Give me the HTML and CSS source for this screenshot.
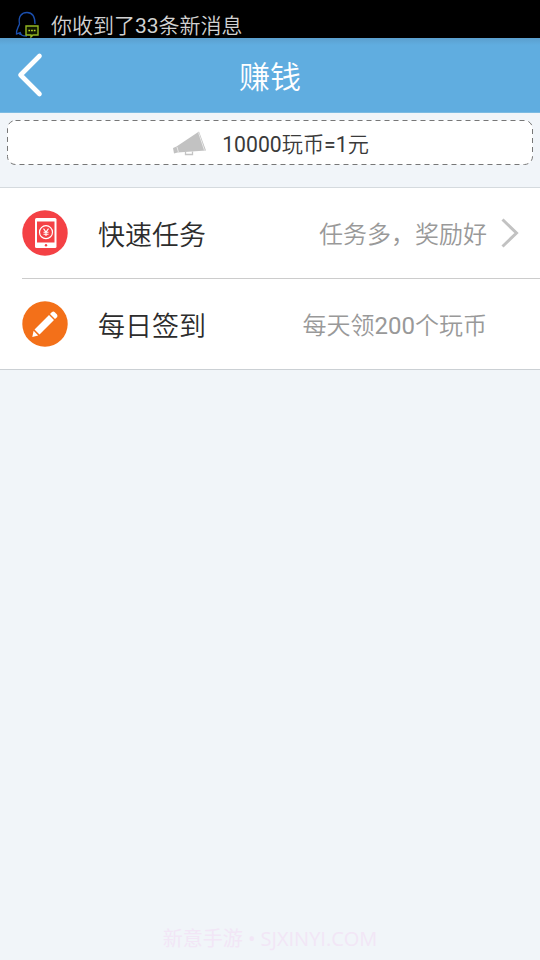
FILE: index.html
```html
<!DOCTYPE html>
<html lang="zh-CN">
<head>
<meta charset="utf-8">
<title>赚钱</title>
<link rel="stylesheet" href="styles.css">
</head>
<body>
<div class="status">
  <svg class="status-icon" width="26" height="28" viewBox="0 0 26 28" fill="none">
    <path d="M5 25 C5 22 4 23 1.500 24 C1 20 3 18 4.500 14 C3 6 7 2.500 12 2.500 C17 2.500 20 6 20 14 M5 22 C6 26 8 26 12 26" stroke="#1b4fae" stroke-width="1.300"/>
    <path d="M11 16 H23 V25 H18 L16 27 V25 H11 Z" fill="#101800" stroke="#93b622" stroke-width="1.400"/>
    <path d="M13.400 20.500 H21" stroke="#b9d62c" stroke-width="1.700" stroke-dasharray="1.700 1"/>
  </svg>
  <span class="status-text">你收到了<span class="num">33</span>条新消息</span>
</div>
<header class="header">
  <svg class="back" width="30" height="46" viewBox="0 0 30 46" fill="none"><path d="M23.500 4 L4.500 23 L23.500 42" stroke="#fff" stroke-width="4.600" stroke-linecap="round" stroke-linejoin="round"/></svg>
  <h1 class="title">赚钱</h1>
</header>
<section class="notice-area">
  <div class="notice">
    <svg class="dashes" width="526" height="46" fill="none"><rect x=".5" y=".5" width="525" height="44" rx="8" fill="#fff" stroke="#777" stroke-dasharray="5 4"/></svg>
    <svg class="horn" width="36" height="26" viewBox="0 0 36 26">
      <path d="M1 18 L4.500 16.500 L27 1.500 L34 20.500 L5.500 22.500 L2 23.500 Z" fill="#c2c2c2"/>
      <path d="M5 17 L6.500 22.500 M26.500 2.500 L32.500 20.500" stroke="#e8e8e8"/>
      <path d="M13.500 21.500 V24.500 H20.500 V21.500" fill="none" stroke="#c4c4c4" stroke-width="1.300"/>
    </svg>
    <span class="notice-text"><span class="num">10000</span>玩币<span class="num">=1</span>元</span>
  </div>
</section>
<main class="list">
  <div class="row">
    <svg class="icon" width="46" height="46" viewBox="0 0 46 46">
      <circle cx="23" cy="23" r="22.700" fill="#f44145"/>
      <rect x="13" y="8" width="21.500" height="30" rx="1.500" fill="#fff"/>
      <rect x="15" y="11.500" width="17.500" height="21" fill="#f44145"/>
      <circle cx="24" cy="22.200" r="6.500" fill="none" stroke="#fff" stroke-width="1.200"/>
      <path d="M21.500 18.700 L24 22 L26.500 18.700 M24 22 V26 M21.500 22.300 H26.500 M21.500 24.200 H26.500" fill="none" stroke="#fff" stroke-width="1.100"/>
      <circle cx="24" cy="35.300" r="1.200" fill="#f44145"/>
    </svg>
    <span class="name">快速任务</span>
    <span class="detail">任务多，奖励好</span>
    <svg class="arrow" width="20" height="32" viewBox="0 0 20 32" fill="none"><path d="M2.500 2.500 L16.500 16 L2.500 29.500" stroke="#c2c2c2" stroke-width="3"/></svg>
  </div>
  <div class="row">
    <svg class="icon" width="46" height="46" viewBox="0 0 46 46">
      <circle cx="23" cy="23" r="22.700" fill="#f37019"/>
      <path d="M12.500 28.500 L27 14 L32 19 L17.500 33.500 Z M11.600 29.800 L16.200 34.400 L10.300 36 Z M28 13 L30 11 Q31.500 10 32.800 11.200 L35 13.500 Q36 15 35 16.200 L33 18 Z" fill="#fff"/>
    </svg>
    <span class="name">每日签到</span>
    <span class="detail">每天领<span class="num">200</span>个玩币</span>
  </div>
</main>
<footer class="brand">新意手游 • SJXINYI.COM</footer>
</body>
</html>
```
FILE: styles.css
```css
* { box-sizing: border-box; }
body {
  margin: 0;
  height: 960px;
  display: flex;
  flex-direction: column;
  overflow: hidden;
  background: #f1f5f9;
  font-family: Roboto, "Noto Sans CJK SC", sans-serif;
  font-weight: 350;
}
svg { flex: none; display: block; }
.num { font-weight: 400; }
.status {
  height: 38px;
  flex: none;
  display: flex;
  background: #000;
  color: #d2d2d2;
}
.status-icon { margin: 10px 0 0 15px; }
.status-text {
  margin-left: 10px;
  padding-top: 11px;
  font-size: 21px;
  line-height: 30px;
  white-space: nowrap;
}
.header {
  height: 75px;
  flex: none;
  display: grid;
  grid-template-columns: 60px 1fr 60px;
  align-items: center;
  background: linear-gradient(#5b9fce, #60ade0 7px);
  border-bottom: 1px solid #7cbbe2;
}
.back { margin-left: 16px; }
.title {
  margin: 0;
  padding-top: 6px;
  text-align: center;
  font-size: 31px;
  line-height: 40px;
  font-weight: 350;
  color: #fff;
}
.notice-area {
  height: 74px;
  flex: none;
  padding: 7px 7px 0;
}
.notice {
  position: relative;
  height: 46px;
  display: flex;
  align-items: center;
  justify-content: center;
}
.dashes { position: absolute; left: 0; top: 0; }
.horn { position: relative; margin: 0 14px 0 1px; }
.notice-text {
  position: relative;
  padding-top: 3px;
  font-size: 21.2px;
  line-height: 30px;
  color: #3a3a3a;
}
.list {
  flex: none;
  background: #fff;
  border-top: 1px solid #d5dade;
  border-bottom: 1px solid #cbd0d4;
}
.row {
  height: 90px;
  margin-left: 22px;
  padding-right: 53px;
  display: flex;
  align-items: center;
  position: relative;
}
.row + .row { height: 91px; border-top: 1px solid #ccc; }
.name {
  margin-left: 30px;
  padding-top: 5px;
  font-size: 27px;
  line-height: 40px;
  color: #2c2c2c;
}
.detail {
  margin-left: auto;
  padding-top: 3px;
  font-size: 24px;
  line-height: 36px;
  color: #999;
}
.arrow { position: absolute; right: 20px; top: 29px; }
.brand {
  margin-top: auto;
  padding-bottom: 7px;
  text-align: center;
  font: 400 20px/28px "Open Sans", "Noto Sans CJK SC", sans-serif;
  color: #f2e6f6;
}
```
